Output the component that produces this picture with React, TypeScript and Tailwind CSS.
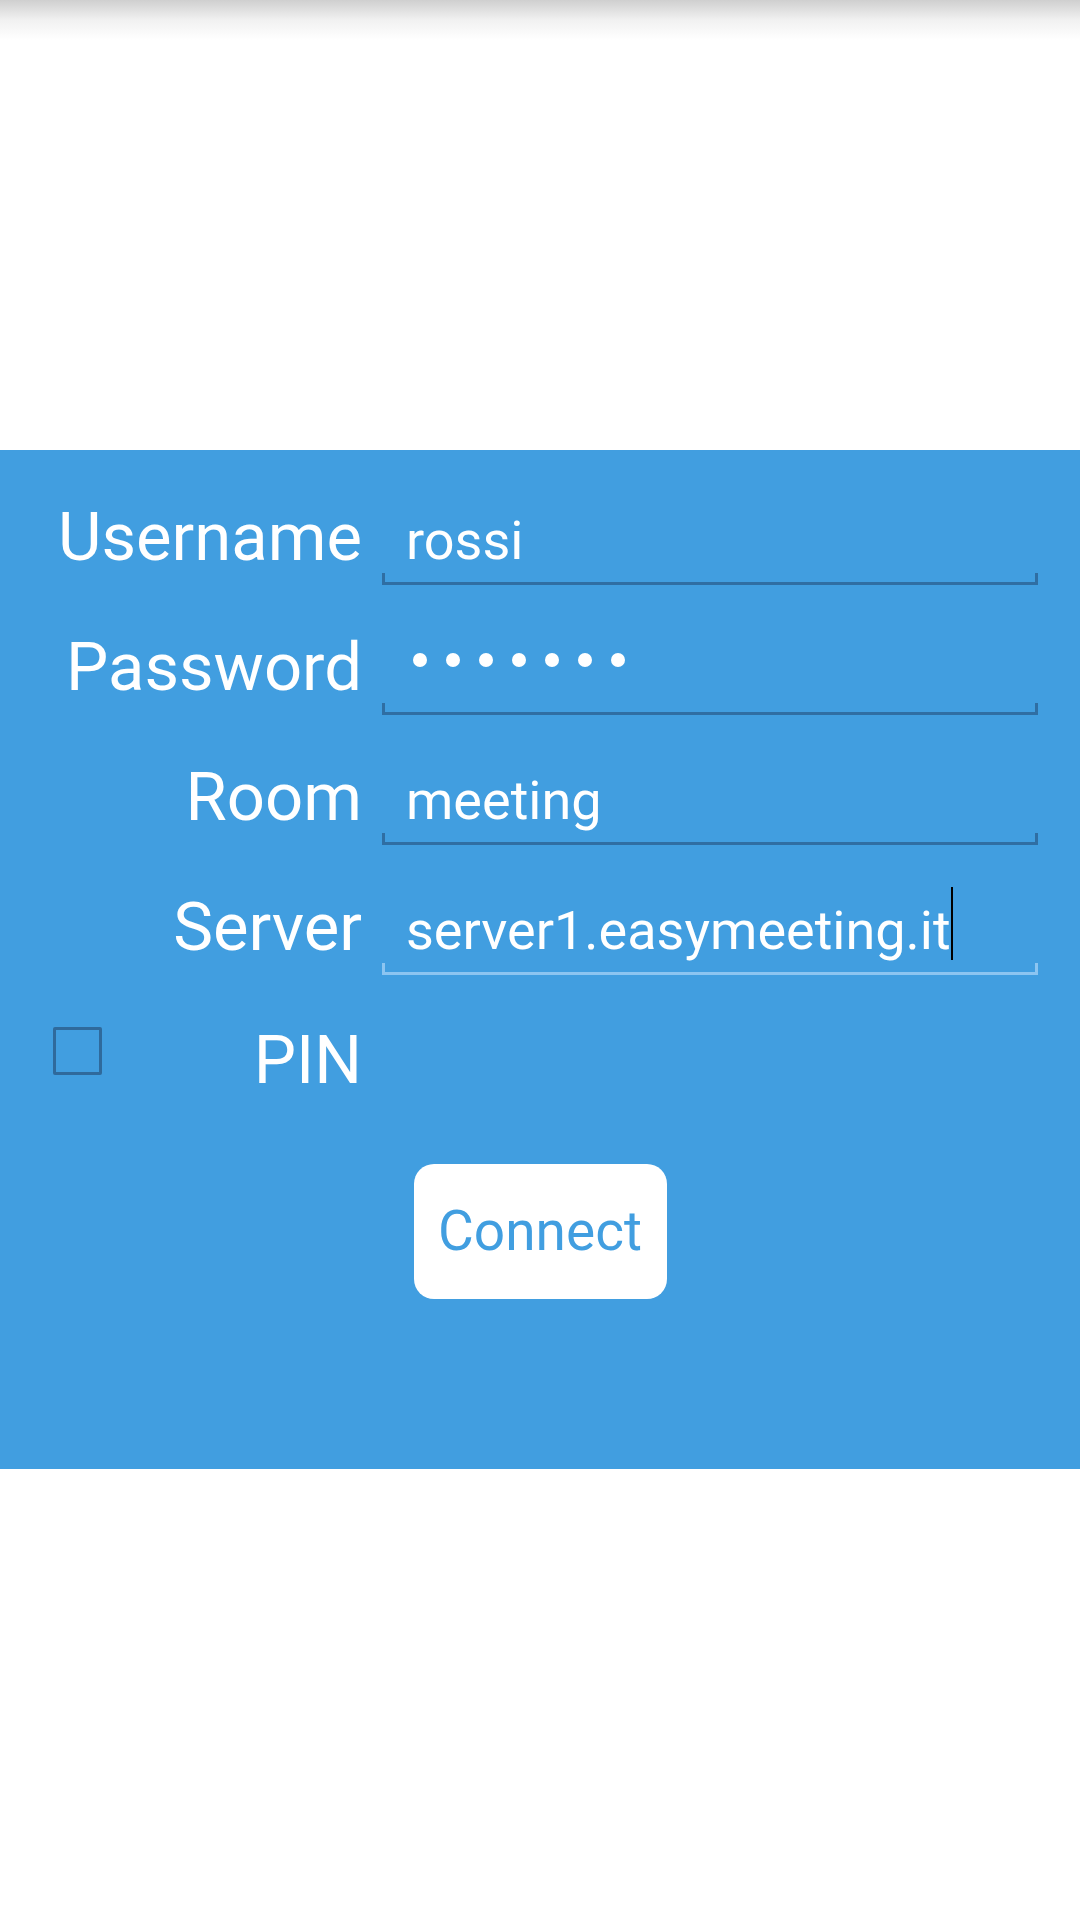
import React from 'react';

type Field = { label: string; value: string; kind: 'text' | 'password' | 'focused' };

const fields: Field[] = [
  { label: 'Username', value: 'rossi', kind: 'text' },
  { label: 'Password', value: '•••••••', kind: 'password' },
  { label: 'Room', value: 'meeting', kind: 'text' },
  { label: 'Server', value: 'server1.easymeeting.it', kind: 'focused' },
];

const FieldRow = ({ field }: { field: Field }) => {
  const focused = field.kind === 'focused';
  return (
    <div className="flex items-end gap-[20px] h-[76px]">
      <div className="w-[362px] text-right text-[67px] leading-[66px] text-white mb-[15px]">{field.label}</div>
      <div className="w-[656px] flex flex-col">
        {field.kind === 'password' ? (
          <div className="h-[55px] flex items-start pt-[10px] pl-[31px] gap-[19px]">
            {Array.from({ length: 7 }).map((_, i) => (
              <span key={i} className="w-[14px] h-[14px] rounded-full bg-white" />
            ))}
          </div>
        ) : (
          <div className="h-[55px] text-[54px] leading-[55px] text-white pl-[24px] whitespace-nowrap">
            <span className="relative">
              {field.value}
              {focused && <span className="absolute left-full top-[-12px] w-[2px] h-[73px] bg-black" />}
            </span>
          </div>
        )}
        <div className="h-[5px]" />
        <div
          className={
            focused
              ? 'h-[12px] border-x-[3px] border-b-[3px] border-[#8cc5f1]'
              : 'h-[12px] border-x-[3px] border-b-[3px] border-[#2f6ea3]'
          }
        />
      </div>
    </div>
  );
};

export default function App() {
  return (
    <div className="w-[1080px] h-[1920px] bg-white font-['Roboto',sans-serif] overflow-hidden">
      {/* тень под статус-баром */}
      <div className="h-[40px] bg-linear-to-b from-[#cfcfcf] via-[#f1f1f1] to-white" />
      <div className="h-[410px]" />

      {/* форма подключения */}
      <div className="h-[1019px] bg-[#419ee0] pt-[59px] flex flex-col gap-[54px]">
        {fields.map((f) => (
          <FieldRow key={f.label} field={f} />
        ))}

        <div className="flex items-end h-[76px]">
          <div className="w-[362px] flex items-end justify-between pl-[53px]">
            <span className="w-[49px] h-[48px] border-[3px] border-[#2f6a9c] rounded-[2px] mb-[30px]" />
            <span className="text-[67px] leading-[66px] text-white mb-[12px]">PIN</span>
          </div>
        </div>

        <div className="flex justify-center mt-[5px]">
          <button className="w-[253px] h-[135px] bg-white rounded-[20px] text-[55px] text-[#419ee0] font-['Roboto',sans-serif]">
            Connect
          </button>
        </div>
      </div>
    </div>
  );
}
